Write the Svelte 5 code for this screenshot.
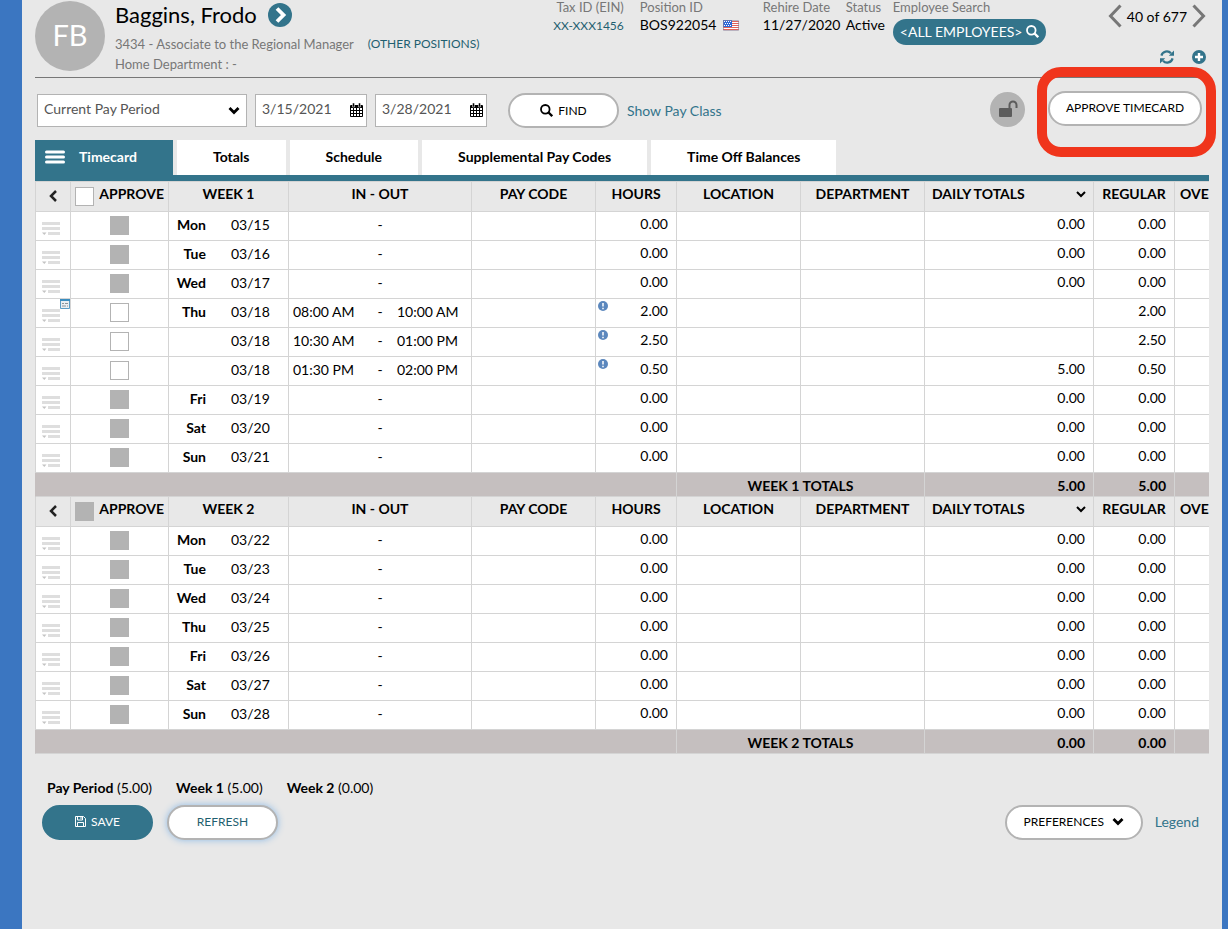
<script lang="ts">
	type Entry = {
		day?: string;
		date: string;
		in?: string;
		out?: string;
		hours: string;
		daily: string;
		note?: boolean;
	};

	type Week = {
		name: string;
		locked: boolean;
		total: string;
		entries: Entry[];
	};

	function emptyDay(day: string, date: string): Entry {
		return { day, date, hours: '0.00', daily: '0.00' };
	}

	const tabs = ['Timecard', 'Totals', 'Schedule', 'Supplemental Pay Codes', 'Time Off Balances'];

	const weeks: Week[] = [
		{
			name: 'Week 1',
			locked: false,
			total: '5.00',
			entries: [
				emptyDay('Mon', '03/15'),
				emptyDay('Tue', '03/16'),
				emptyDay('Wed', '03/17'),
				{ day: 'Thu', date: '03/18', in: '08:00 AM', out: '10:00 AM', hours: '2.00', daily: '', note: true },
				{ date: '03/18', in: '10:30 AM', out: '01:00 PM', hours: '2.50', daily: '' },
				{ date: '03/18', in: '01:30 PM', out: '02:00 PM', hours: '0.50', daily: '5.00' },
				emptyDay('Fri', '03/19'),
				emptyDay('Sat', '03/20'),
				emptyDay('Sun', '03/21')
			]
		},
		{
			name: 'Week 2',
			locked: true,
			total: '0.00',
			entries: [
				emptyDay('Mon', '03/22'),
				emptyDay('Tue', '03/23'),
				emptyDay('Wed', '03/24'),
				emptyDay('Thu', '03/25'),
				emptyDay('Fri', '03/26'),
				emptyDay('Sat', '03/27'),
				emptyDay('Sun', '03/28')
			]
		}
	];

	let activeTab = $state('Timecard');
	let period = $state('Current Pay Period');
	let startDate = $state('3/15/2021');
	let endDate = $state('3/28/2021');
</script>

{#snippet chevron()}
	<svg class="chevron" viewBox="0 0 12 9" width="12" height="9" aria-hidden="true">
		<path d="M1.5 2 6 6.5 10.5 2" fill="none" stroke="currentColor" stroke-width="2.8" />
	</svg>
{/snippet}

{#snippet calendar()}
	<svg viewBox="0 0 13 14" width="13" height="14" aria-hidden="true">
		<path d="M1 2h11a1 1 0 0 1 1 1v10a1 1 0 0 1-1 1H1a1 1 0 0 1-1-1V3a1 1 0 0 1 1-1z" fill="#000" />
		<path d="M2.5 0h2v4h-2zM8.5 0h2v4h-2z" fill="#000" stroke="#fff" stroke-width=".5" />
		<path
			d="M1 5h2v2H1zM4 5h2v2H4zM7 5h2v2H7zM10 5h2v2h-2zM1 8h2v2H1zM4 8h2v2H4zM7 8h2v2H7zM10 8h2v2h-2zM1 11h2v2H1zM4 11h2v2H4zM7 11h2v2H7zM10 11h2v2h-2z"
			fill="#fff"
		/>
	</svg>
{/snippet}

{#snippet magnifier()}
	<svg viewBox="0 0 13 13" width="13" height="13" aria-hidden="true">
		<circle cx="5.3" cy="5.3" r="4.3" fill="none" stroke="currentColor" stroke-width="1.8" />
		<path d="m8.3 8.3 3.9 3.9" stroke="currentColor" stroke-width="2.3" />
	</svg>
{/snippet}

<main class="page">
	<header class="employee">
		<div class="avatar">FB</div>
		<div class="identity">
			<div class="name">
				<h1>Baggins, Frodo</h1>
				<button class="plain" aria-label="Employee details">
					<svg viewBox="0 0 24 24" width="24" height="24">
						<circle cx="12" cy="12" r="12" fill="#33748b" />
						<path d="m9 5.500 6.500 6.500L9 18.500" fill="none" stroke="#fff" stroke-width="3.800" />
					</svg>
				</button>
			</div>
			<div class="position">
				<span>3434 - Associate to the Regional Manager</span>
				<a href="#positions">(OTHER POSITIONS)</a>
			</div>
			<div class="position">Home Department : -</div>
		</div>

		<div class="facts">
			<div class="fact tax">
				<span class="caption">Tax ID (EIN)</span>
				<a class="value" href="#tax">XX-XXX1456</a>
			</div>
			<div class="fact">
				<span class="caption">Position ID</span>
				<span class="value">
					BOS922054
					<svg viewBox="0 0 16 11" width="16" height="11" aria-hidden="true">
						<path d="M0 0h16v11H0z" fill="#fff" />
						<path d="M8 1.500h8M8 3.500h8M8 5.500h8M0 7.500h16M0 9.500h16" stroke="#e0635a" />
						<path d="M0 0h9v7H0z" fill="#2f68d6" />
						<path d="M1 1.500h7M2 3.500h6M1 5.500h7" stroke="#fff" stroke-dasharray="1 1" />
						<path d="M.5.5h15v10H.5z" fill="none" stroke="#8a7f95" stroke-opacity=".6" />
					</svg>
				</span>
			</div>
			<div class="fact">
				<span class="caption">Rehire Date</span>
				<span class="value">11/27/2020</span>
			</div>
			<div class="fact">
				<span class="caption">Status</span>
				<span class="value">Active</span>
			</div>
			<div class="fact">
				<span class="caption">Employee Search</span>
				<button class="search">&lt;ALL EMPLOYEES&gt; {@render magnifier()}</button>
			</div>
		</div>

		<div class="paging">
			<div class="pager">
				<button class="plain" aria-label="Previous employee">
					<svg viewBox="0 0 14 24" width="14" height="24">
						<path d="M12.5 1.500 2.500 12l10 10.500" fill="none" stroke="#777" stroke-width="3" />
					</svg>
				</button>
				<span>40 of 677</span>
				<button class="plain" aria-label="Next employee">
					<svg viewBox="0 0 14 24" width="14" height="24">
						<path d="M1.500 1.500 11.500 12l-10 10.500" fill="none" stroke="#777" stroke-width="3" />
					</svg>
				</button>
			</div>
			<div class="tools">
				<button class="plain" aria-label="Reload">
					<svg viewBox="0 0 14 14" width="14" height="14">
						<path d="M1.400 5.600A5.600 5.600 0 0 1 11 3.300M12.600 8.400A5.600 5.600 0 0 1 3 10.700" fill="none" stroke="#33748b" stroke-width="2.200" />
						<path d="M14 .6v5.200H8.800zM0 13.400V8.200h5.200z" fill="#33748b" />
					</svg>
				</button>
				<button class="plain" aria-label="Add">
					<svg viewBox="0 0 14 14" width="14" height="14">
						<circle cx="7" cy="7" r="7" fill="#33748b" />
						<path d="M7 3v8M3 7h8" stroke="#fff" stroke-width="2.400" />
					</svg>
				</button>
			</div>
		</div>
	</header>

	<section class="toolbar">
		<div class="field period">
			<select aria-label="Pay period" bind:value={period}>
				<option>Current Pay Period</option>
			</select>
			{@render chevron()}
		</div>
		<div class="field date">
			<input type="text" aria-label="Start date" bind:value={startDate} />
			<button class="plain" aria-label="Pick start date">{@render calendar()}</button>
		</div>
		<div class="field date">
			<input type="text" aria-label="End date" bind:value={endDate} />
			<button class="plain" aria-label="Pick end date">{@render calendar()}</button>
		</div>
		<button class="pill find">{@render magnifier()} FIND</button>
		<a class="text-link" href="#pay-class">Show Pay Class</a>
		<button class="lock" aria-label="Unlock timecard">
			<svg viewBox="0 0 20 18" width="20" height="18">
				<rect x="1" y="8" width="13" height="9" rx="1" fill="#5c5c5c" />
				<path d="M11.500 8V5a3.500 3.500 0 0 1 7 0v3" fill="none" stroke="#5c5c5c" stroke-width="2" />
			</svg>
		</button>
		<div class="approve">
			<button class="pill">APPROVE TIMECARD</button>
			<div class="callout"></div>
		</div>
	</section>

	<nav class="tabs">
		{#each tabs as tab}
			<button class="tab" class:active={tab === activeTab} onclick={() => (activeTab = tab)}>
				{#if tab === activeTab}
					<svg viewBox="0 0 20 14" width="20" height="14" aria-hidden="true">
						<path d="M1.500 2h17M1.500 7h17M1.500 12h17" stroke="#fff" stroke-width="3" stroke-linecap="round" />
					</svg>
				{/if}
				{tab}
			</button>
		{/each}
	</nav>

	<div class="grid">
		<table>
			<colgroup>
				<col class="c-menu" />
				<col class="c-approve" />
				<col class="c-week" />
				<col class="c-punch" />
				<col class="c-code" />
				<col class="c-hours" />
				<col class="c-code" />
				<col class="c-code" />
				<col class="c-daily" />
				<col class="c-hours" />
				<col />
			</colgroup>
			{#each weeks as week}
				<tbody>
					<tr>
						<th>
							<button class="plain collapse" aria-label="Collapse {week.name}">
								<svg viewBox="0 0 8 12" width="8" height="12">
									<path d="M7 1 2 6l5 5" fill="none" stroke="#222" stroke-width="2.500" />
								</svg>
							</button>
						</th>
						<th>
							<label class="approve-all">
								<input type="checkbox" disabled={week.locked} />
								<span>APPROVE</span>
							</label>
						</th>
						<th>{week.name.toUpperCase()}</th>
						<th>IN - OUT</th>
						<th>PAY CODE</th>
						<th>HOURS</th>
						<th>LOCATION</th>
						<th>DEPARTMENT</th>
						<th>
							<div class="daily-head">
								DAILY TOTALS
								<svg viewBox="0 0 10 8" width="10" height="8" aria-hidden="true">
									<path d="m1 2 4 4 4-4" fill="none" stroke="#000" stroke-width="2" />
								</svg>
							</div>
						</th>
						<th>REGULAR</th>
						<th class="overtime">OVE</th>
					</tr>
					{#each week.entries as entry}
						<tr>
							<td class="menu-cell">
								<button class="plain" aria-label="Row menu {entry.date}">
									<svg viewBox="0 0 18 13" width="18" height="13">
										<path d="M0 1.500h18M0 6.500h18M6 11.500h12" stroke="#dedede" stroke-width="3" />
										<path d="M0 10.500h4.500l-2.200 2.500z" fill="#c4c4c4" />
									</svg>
								</button>
								{#if entry.note}
									<svg class="note" viewBox="0 0 10 10" width="10" height="10" aria-hidden="true">
										<path d="M.5.5h9v9h-9z" fill="#e9eef2" stroke="#5a9cc5" />
										<path d="M0 1h10" stroke="#3b8dbf" stroke-width="2" />
										<path d="M2 4.500h2M5 4.500h3M2 7h4M7 7h1" stroke="#8a9399" />
									</svg>
								{/if}
							</td>
							<td>
								<input type="checkbox" aria-label="Approve {entry.date}" disabled={!entry.in} />
							</td>
							<td>
								<div class="date-cell">
									<b>{entry.day ?? ''}</b>
									<span>{entry.date}</span>
								</div>
							</td>
							<td>
								<div class="punch">
									<span>{entry.in ?? ''}</span>
									<span class="dash">-</span>
									<span>{entry.out ?? ''}</span>
								</div>
							</td>
							<td></td>
							<td class="num">
								{#if entry.in}
									<svg class="info" viewBox="0 0 10 10" width="10" height="10" aria-hidden="true">
										<circle cx="5" cy="5" r="5" fill="#5b87bd" />
										<path d="M5 2v3.500M5 6.800v1.400" stroke="#fff" stroke-width="1.500" />
									</svg>
								{/if}
								{entry.hours}
							</td>
							<td></td>
							<td></td>
							<td class="num">{entry.daily}</td>
							<td class="num">{entry.hours}</td>
							<td></td>
						</tr>
					{/each}
					<tr class="totals">
						<td colspan="6"></td>
						<td colspan="2" class="center">{week.name.toUpperCase()} TOTALS</td>
						<td class="num">{week.total}</td>
						<td class="num">{week.total}</td>
						<td></td>
					</tr>
				</tbody>
			{/each}
		</table>
	</div>

	<footer>
		<div class="summary">
			<span><b>Pay Period</b> (5.00)</span>
			{#each weeks as week}
				<span><b>{week.name}</b> ({week.total})</span>
			{/each}
		</div>
		<div class="actions">
			<button class="pill save">
				<svg viewBox="0 0 11 11" width="11" height="11" aria-hidden="true">
					<path d="M.5.5h8l2 2v8H.5z" fill="none" stroke="#fff" />
					<path d="M2.500.5v3.500h5V.5M2.500 10.500v-4h6v4M6 1v2" fill="none" stroke="#fff" />
				</svg>
				SAVE
			</button>
			<button class="pill refresh">REFRESH</button>
			<button class="pill preferences">PREFERENCES {@render chevron()}</button>
			<a class="text-link" href="#legend">Legend</a>
		</div>
	</footer>
</main>

<style>
	:global(body) {
		background: #3b76c1;
	}

	.page {
		box-sizing: border-box;
		min-height: 100vh;
		margin: 0 6px 0 22px;
		padding: 0 13px;
		background: #e8e8e8;
		color: #000;
		font-family: Lato, "Liberation Sans", sans-serif;
		font-size: 14px;
	}

	button,
	input,
	select {
		font: inherit;
		color: inherit;
		margin: 0;
		box-sizing: border-box;
	}

	button {
		cursor: pointer;
	}

	svg {
		flex: none;
	}

	a {
		color: #1f5f70;
		text-decoration: none;
	}

	.plain {
		display: flex;
		padding: 0;
		border: 0;
		background: none;
	}

	.employee {
		display: flex;
		height: 77px;
		border-bottom: 1px solid #777;
	}

	.avatar {
		flex: none;
		width: 70px;
		height: 70px;
		margin: 1px 10px 0 0;
		border-radius: 50%;
		background: #b3b3b3;
		color: #fff;
		font-size: 29px;
		line-height: 68px;
		text-align: center;
	}

	.identity {
		flex: 1;
		white-space: nowrap;
	}

	.name {
		display: flex;
		align-items: center;
		gap: 11px;
		height: 30px;
		margin-bottom: 4px;
	}

	h1 {
		margin: 0;
		font-size: 22px;
		font-weight: 400;
		line-height: 30px;
	}

	.position {
		display: flex;
		gap: 14px;
		color: #777;
		font-size: 13px;
		line-height: 20px;
	}

	.position a {
		font-size: 12px;
	}

	.facts {
		display: grid;
		grid-template-columns: 83px 123px 83px 47px 153px;
		margin-right: 62px;
		white-space: nowrap;
	}

	.fact {
		display: flex;
		flex-direction: column;
		align-items: flex-start;
	}

	.tax {
		align-items: flex-end;
		padding-right: 16px;
	}

	.caption {
		color: #777;
		font-size: 13px;
		line-height: 14px;
	}

	.value {
		display: flex;
		align-items: center;
		gap: 7px;
		line-height: 22px;
	}

	.tax .value {
		font-size: 12px;
		line-height: 24px;
	}

	.search {
		display: flex;
		align-items: center;
		justify-content: space-between;
		width: 100%;
		height: 26px;
		margin-top: 5px;
		padding: 0 7px 2px;
		border: 0;
		border-radius: 13px;
		background: #33748b;
		color: #fff;
	}

	.paging {
		display: flex;
		flex-direction: column;
		padding-right: 3px;
	}

	.pager {
		display: flex;
		align-items: center;
		gap: 5px;
		height: 32px;
		white-space: nowrap;
	}

	.tools {
		display: flex;
		justify-content: flex-end;
		gap: 18px;
		padding-top: 18px;
	}

	.toolbar {
		display: flex;
		align-items: center;
		gap: 8px;
		height: 62px;
		padding: 2px 7px 0 2px;
		box-sizing: border-box;
	}

	.field {
		display: flex;
		align-items: center;
		box-sizing: border-box;
		height: 33px;
		border: 1px solid #b3b3b3;
		background: #fff;
		color: #555;
	}

	.period {
		position: relative;
		width: 210px;
	}

	.period select {
		appearance: none;
		width: 100%;
		height: 100%;
		padding: 0 6px 4px;
		border: 0;
		background: none;
	}

	.period .chevron {
		position: absolute;
		right: 6px;
		color: #000;
		pointer-events: none;
	}

	.date {
		width: 112px;
		padding-right: 3px;
	}

	.date input {
		flex: 1;
		min-width: 0;
		height: 100%;
		padding: 0 0 4px 6px;
		border: 0;
		background: none;
	}

	.pill {
		display: flex;
		align-items: center;
		justify-content: center;
		height: 35px;
		padding: 0 0 2px;
		border: 2px solid #b3b3b3;
		border-radius: 18px;
		background: #fff;
		font-size: 12px;
		white-space: nowrap;
	}

	.find {
		gap: 5px;
		width: 111px;
		margin-left: 13px;
		padding: 0;
	}

	.text-link {
		color: #33748b;
		font-size: 14px;
	}

	.lock {
		display: flex;
		align-items: center;
		justify-content: center;
		width: 35px;
		height: 35px;
		margin: 0 0 2px auto;
		padding: 0;
		border: 0;
		border-radius: 50%;
		background: #b3b3b3;
	}

	.approve {
		position: relative;
		margin: 0 0 4px 15px;
	}

	.approve .pill {
		width: 154px;
	}

	.callout {
		position: absolute;
		inset: -24px -14px -31px -11px;
		border: 10px solid #f0351c;
		border-radius: 24px;
		pointer-events: none;
	}

	.tabs {
		display: flex;
		gap: 4px;
		border-bottom: 6px solid #33748b;
	}

	.tab {
		display: flex;
		align-items: center;
		height: 35px;
		padding: 0 36px 3px;
		border: 0;
		background: #fff;
		font-weight: 700;
		white-space: nowrap;
	}

	.tab.active {
		gap: 14px;
		padding: 0 36px 2px 10px;
		background: #33748b;
		color: #fff;
	}

	.grid {
		overflow: hidden;
	}

	table {
		width: 100%;
		table-layout: fixed;
		border-collapse: separate;
		border-spacing: 0;
		border-top: 1px solid #d4d4d4;
		white-space: nowrap;
	}

	.c-menu {
		width: 36px;
	}

	.c-approve {
		width: 98px;
	}

	.c-week {
		width: 120px;
	}

	.c-punch {
		width: 183px;
	}

	.c-code {
		width: 124px;
	}

	.c-hours {
		width: 81px;
	}

	.c-daily {
		width: 169px;
	}

	th,
	td {
		position: relative;
		box-sizing: border-box;
		height: 29px;
		padding: 0 0 2px;
		border-right: 1px solid #d4d4d4;
		border-bottom: 1px solid #d4d4d4;
		background: #fff;
		line-height: 20px;
	}

	th:first-child,
	td:first-child {
		border-left: 1px solid #d4d4d4;
	}

	th:last-child,
	td:last-child {
		border-right: 0;
	}

	th {
		height: 30px;
		padding-bottom: 6px;
		background: #e8e8e8;
	}

	.overtime {
		padding-left: 5px;
		text-align: left;
	}

	.collapse {
		margin: 5px auto 0;
	}

	.approve-all {
		display: flex;
		justify-content: space-between;
		height: 20px;
		padding: 0 4px;
	}

	.approve-all input {
		margin-top: 3px;
	}

	input[type="checkbox"] {
		display: block;
		appearance: none;
		width: 19px;
		height: 19px;
		border: 1px solid #b3b3b3;
		background: #fff;
	}

	td input[type="checkbox"] {
		margin: 0 auto;
	}

	input[type="checkbox"]:disabled {
		background: #b3b3b3;
	}

	.daily-head {
		display: flex;
		align-items: center;
		justify-content: space-between;
		padding: 0 7px;
	}

	.menu-cell .plain {
		margin: 6px 0 0 6px;
	}

	.note {
		position: absolute;
		top: 0;
		right: 0;
	}

	.info {
		position: absolute;
		top: 2px;
		left: 2px;
	}

	.date-cell {
		display: grid;
		grid-template-columns: 37px 1fr;
		gap: 25px;
	}

	.date-cell b {
		text-align: right;
	}

	.punch {
		display: grid;
		grid-template-columns: 1fr 34px 1fr;
		padding: 0 4px;
	}

	.dash {
		text-align: center;
	}

	.num {
		padding: 0 8px 4px 0;
		text-align: right;
	}

	.center {
		text-align: center;
	}

	.totals td {
		height: 24px;
		padding-top: 2px;
		padding-bottom: 0;
		background: #c5bfbf;
		font-weight: 700;
	}

	.totals td:first-child {
		border-left-color: #c5bfbf;
	}

	.summary {
		display: flex;
		gap: 24px;
		padding: 24px 12px 6px;
		line-height: 20px;
	}

	.actions {
		display: flex;
		align-items: center;
		padding: 1px 10px 0 7px;
	}

	.actions .text-link {
		padding-bottom: 2px;
	}

	.save {
		gap: 5px;
		width: 111px;
		border-color: #33748b;
		background: #33748b;
		color: #fff;
	}

	.refresh {
		width: 111px;
		margin-left: 14px;
		color: #1f5f70;
		box-shadow: 0 0 7px #8fbbe6;
	}

	.preferences {
		gap: 8px;
		width: 138px;
		margin: 0 12px 0 auto;
	}
</style>
